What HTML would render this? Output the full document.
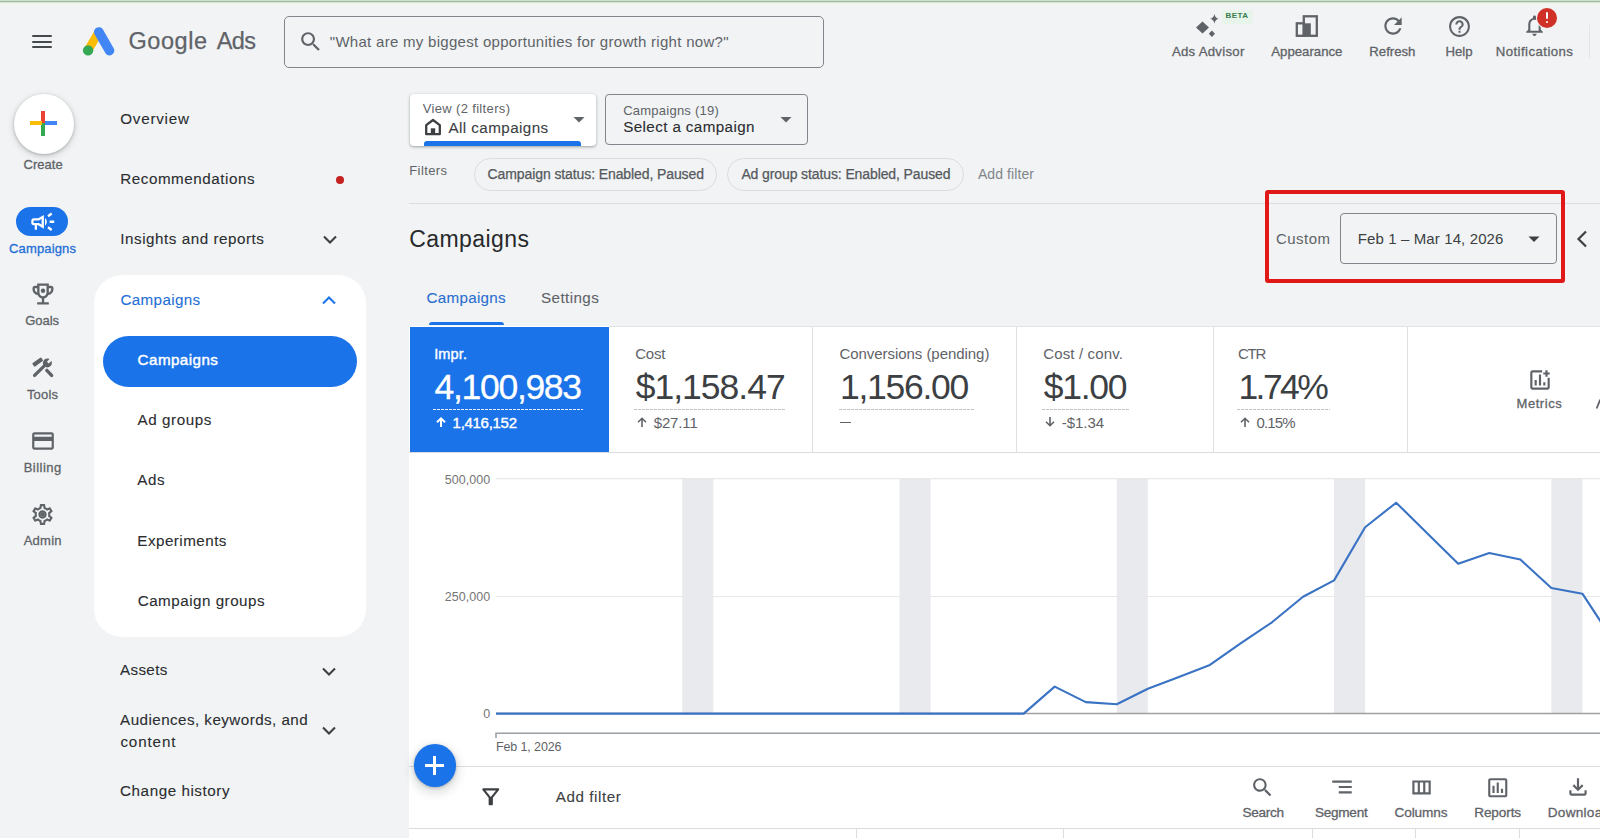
<!DOCTYPE html>
<html><head><meta charset="utf-8"><style>
html,body{margin:0;padding:0}
body{width:1600px;height:838px;overflow:hidden;background:#f1f3f4;font-family:"Liberation Sans", sans-serif;position:relative}
.t{position:absolute;white-space:nowrap}
</style></head><body>
<div style="position:absolute;left:0px;top:0px;width:1600px;height:1px;background:#cde1cc"></div>
<div style="position:absolute;left:0px;top:1px;width:1600px;height:1px;background:#a4b9a4"></div>
<div style="position:absolute;left:0px;top:2px;width:1600px;height:1px;background:#d6e8d4"></div>
<div style="position:absolute;left:0px;top:3px;width:1600px;height:1px;background:#ebf5eb"></div>
<div style="position:absolute;left:32px;top:35.2px;width:20px;height:2px;background:#45484c;border-radius:1px"></div>
<div style="position:absolute;left:32px;top:40.5px;width:20px;height:2px;background:#45484c;border-radius:1px"></div>
<div style="position:absolute;left:32px;top:45.8px;width:20px;height:2px;background:#45484c;border-radius:1px"></div>
<svg style="position:absolute;left:82px;top:26px;" width="34" height="31" viewBox="0 0 34 31">
<line x1="6" y1="24.4" x2="16.8" y2="6" stroke="#fbbc04" stroke-width="8.6" stroke-linecap="butt"/>
<line x1="16.8" y1="6" x2="27.5" y2="24.6" stroke="#4285f4" stroke-width="9.6" stroke-linecap="round"/>
<circle cx="6.1" cy="24.4" r="5.2" fill="#34a853"/>
</svg>
<div class="t" style="left:128.40px;top:30.00px;font-size:23.5px;line-height:23.5px;color:#5f6368;letter-spacing:0.603px;-webkit-text-stroke:0.25px #5f6368;">Google</div>
<div class="t" style="left:216.70px;top:30.00px;font-size:23.5px;line-height:23.5px;color:#5f6368;letter-spacing:-0.539px;-webkit-text-stroke:0.25px #5f6368;">Ads</div>
<div style="position:absolute;left:284px;top:16px;width:539.5px;height:51.5px;border:1.5px solid #80868b;border-radius:5px;box-sizing:border-box"></div>
<svg style="position:absolute;left:297.80px;top:28.75px" width="25.5" height="25.5" viewBox="0 0 24 24"><path d="M15.5 14h-.79l-.28-.27C15.41 12.59 16 11.11 16 9.5 16 5.91 13.09 3 9.5 3S3 5.91 3 9.5 5.91 16 9.5 16c1.61 0 3.09-.59 4.23-1.57l.27.28v.79l5 4.99L20.49 19l-4.99-5zm-6 0C7.01 14 5 11.99 5 9.5S7.01 5 9.5 5 14 7.01 14 9.5 11.99 14 9.5 14z" fill="#5f6368"/></svg>
<div class="t" style="left:329.80px;top:34.00px;font-size:15px;line-height:15px;color:#5f6368;letter-spacing:0.289px;">"What are my biggest opportunities for growth right now?"</div>
<svg style="position:absolute;left:1190px;top:10px;" width="34" height="30" viewBox="0 0 34 30">
<path d="M12.5 11.5 L19 17.5 L12.5 23.5 L6 17.5 Z" fill="#5f6368"/>
<path d="M24.4 4.2 Q25 8 28.5 8.8 Q25 9.6 24.4 13.4 Q23.8 9.6 20.3 8.8 Q23.8 8 24.4 4.2 Z" fill="#5f6368" transform="translate(24.4 8.8) scale(1.05) translate(-24.4 -8.8)"/>
<path d="M21.9 20.5 L25 23.7 L21.9 26.9 L18.8 23.7 Z" fill="#5f6368"/>
</svg>
<div style="position:absolute;left:1222px;top:9.5px;width:31px;height:14px;background:#e6f4ea;border-radius:3px"></div>
<div class="t" style="left:1225.60px;top:12.00px;font-size:8px;line-height:8px;color:#3a7a50;font-weight:700;letter-spacing:0.407px;">BETA</div>
<div class="t" style="left:1171.90px;top:45.00px;font-size:13.2px;line-height:13.2px;color:#5f6368;letter-spacing:0.280px;-webkit-text-stroke:0.3px #5f6368;">Ads Advisor</div>
<svg style="position:absolute;left:1294px;top:14px;" width="26" height="24" viewBox="0 0 26 24">
<rect x="2.8" y="9.3" width="7" height="12.5" fill="none" stroke="#5f6368" stroke-width="2.3"/>
<rect x="9.8" y="2.3" width="13" height="19.5" fill="none" stroke="#5f6368" stroke-width="2.3"/>
<rect x="9.8" y="9.3" width="7" height="12.5" fill="#5f6368"/>
</svg>
<div class="t" style="left:1271.25px;top:45.00px;font-size:13.2px;line-height:13.2px;color:#5f6368;letter-spacing:0.008px;-webkit-text-stroke:0.3px #5f6368;">Appearance</div>
<svg style="position:absolute;left:1379.85px;top:13.00px" width="26" height="26" viewBox="0 0 24 24"><path d="M17.65 6.35C16.2 4.9 14.21 4 12 4c-4.42 0-7.99 3.58-7.99 8s3.57 8 7.99 8c3.73 0 6.84-2.55 7.73-6h-2.08c-.82 2.33-3.04 4-5.65 4-3.31 0-6-2.69-6-6s2.69-6 6-6c1.66 0 3.14.69 4.220 1.78L13 11h7V4l-2.35 2.35z" fill="#5f6368"/></svg>
<div class="t" style="left:1369.30px;top:45.00px;font-size:13.2px;line-height:13.2px;color:#5f6368;letter-spacing:-0.006px;-webkit-text-stroke:0.3px #5f6368;">Refresh</div>
<svg style="position:absolute;left:1446.90px;top:13.65px" width="25" height="25" viewBox="0 0 24 24"><path d="M11 18h2v-2h-2v2zm1-16C6.48 2 2 6.48 2 12s4.48 10 10 10 10-4.48 10-10S17.52 2 12 2zm0 18c-4.41 0-8-3.59-8-8s3.59-8 8-8 8 3.59 8 8-3.59 8-8 8zm0-14c-2.21 0-4 1.79-4 4h2c0-1.1.9-2 2-2s2 .9 2 2c0 2-3 1.75-3 5h2c0-2.25 3-2.5 3-5 0-2.21-1.79-4-4-4z" fill="#5f6368"/></svg>
<div class="t" style="left:1445.50px;top:45.00px;font-size:13.2px;line-height:13.2px;color:#5f6368;letter-spacing:-0.053px;-webkit-text-stroke:0.3px #5f6368;">Help</div>
<svg style="position:absolute;left:1522.00px;top:12.90px" width="25" height="25" viewBox="0 0 24 24"><path d="M12 22c1.1 0 2-.9 2-2h-4c0 1.1.9 2 2 2zm6-6v-5c0-3.07-1.64-5.64-4.5-6.32V4c0-.83-.67-1.5-1.5-1.5s-1.5.67-1.5 1.5v.68C7.63 5.36 6 7.92 6 11v5l-2 2v1h16v-1l-2-2zm-2 1H8v-6c0-2.48 1.51-4.5 4-4.5s4 2.020 4 4.5v6z" fill="#5f6368"/></svg>
<div style="position:absolute;left:1536.5px;top:7.5px;width:20.5px;height:20.5px;background:#d03127;border-radius:50%;box-shadow:0 0 0 1px #f1f3f4"></div>
<div style="position:absolute;left:1545.6px;top:11.5px;width:2.3px;height:7.5px;background:#fff;border-radius:1px"></div>
<div style="position:absolute;left:1545.6px;top:21px;width:2.3px;height:2.3px;background:#fff;border-radius:1px"></div>
<div class="t" style="left:1495.75px;top:45.00px;font-size:13.2px;line-height:13.2px;color:#5f6368;letter-spacing:0.445px;-webkit-text-stroke:0.3px #5f6368;">Notifications</div>
<div style="position:absolute;left:1588.5px;top:25px;width:1px;height:33px;background:#e3e5e8"></div>
<div style="position:absolute;left:13.5px;top:93.5px;width:60px;height:60px;background:#fff;border-radius:50%;box-shadow:0 1px 3px rgba(60,64,67,.3),0 2px 6px 1px rgba(60,64,67,.15)"></div>
<div style="position:absolute;left:41.3px;top:110.5px;width:3.8px;height:12.5px;background:#ea4335"></div>
<div style="position:absolute;left:44.5px;top:120.8px;width:12px;height:3.8px;background:#4285f4"></div>
<div style="position:absolute;left:41.3px;top:122.8px;width:3.8px;height:13.2px;background:#34a853"></div>
<div style="position:absolute;left:30px;top:120.8px;width:11.5px;height:3.8px;background:#fbbc04"></div>
<div class="t" style="left:23.60px;top:158.00px;font-size:13px;line-height:13px;color:#5f6368;letter-spacing:0.014px;-webkit-text-stroke:0.3px #5f6368;">Create</div>
<div style="position:absolute;left:16px;top:207px;width:52px;height:29px;background:#1a73e8;border-radius:14.5px"></div>
<svg style="position:absolute;left:28.65px;top:208.15px" width="27.5" height="27.5" viewBox="0 0 24 24"><path d="M18 13v-2h4v2h-4Zm1.2 7L16 17.6l1.2-1.6 3.2 2.4-1.2 1.6Zm-2-12L16 6.4 19.2 4l1.2 1.6L17.2 8ZM5 19v-4H4q-.825 0-1.412-.587T2 13v-2q0-.825.588-1.413T4 9h4l5-3v12l-5-3H7v4H5Zm6-4.550v-4.9L8.55 11H4v2h4.55L11 14.45ZM14 15.35v-6.7q.675.6 1.088 1.463T15.5 12q0 1.025-.413 1.888T14 15.35Z" fill="#fff"/></svg>
<div class="t" style="left:9.00px;top:242.00px;font-size:13px;line-height:13px;color:#1f6fd6;letter-spacing:0.157px;-webkit-text-stroke:0.3px #1f6fd6;">Campaigns</div>
<svg style="position:absolute;left:28.55px;top:280.20px" width="28" height="28" viewBox="0 0 24 24"><path d="M19 5h-2V3H7v2H5c-1.1 0-2 .9-2 2v1c0 2.55 1.92 4.63 4.39 4.94.63 1.5 1.98 2.63 3.61 2.96V19H7v2h10v-2h-4v-3.1c1.63-.33 2.98-1.46 3.61-2.96C19.08 12.63 21 10.55 21 8V7c0-1.1-.9-2-2-2zM5 8V7h2v3.82C5.84 10.4 5 9.3 5 8zm7 6c-1.65 0-3-1.35-3-3V5h6v6c0 1.65-1.35 3-3 3zm7-6c0 1.3-.84 2.4-2 2.82V7h2v1z" fill="#5f6368"/><circle cx="12" cy="9.2" r="1.9" fill="#5f6368"/></svg>
<div class="t" style="left:25.30px;top:314.00px;font-size:13px;line-height:13px;color:#5f6368;letter-spacing:-0.066px;-webkit-text-stroke:0.3px #5f6368;">Goals</div>
<svg style="position:absolute;left:30.6px;top:356.2px;" width="24" height="24" viewBox="0 0 24 24">
<line x1="15.8" y1="14.4" x2="20.6" y2="19.4" stroke="#5f6368" stroke-width="3.4" stroke-linecap="round"/>
<rect x="-5.4" y="-2.1" width="10.8" height="4.2" rx="0.8" transform="translate(6.7 6.1) rotate(-36)" fill="#5f6368"/>
<line x1="3.6" y1="19.4" x2="13.8" y2="9.4" stroke="#5f6368" stroke-width="3.3" stroke-linecap="round"/>
<circle cx="16.4" cy="6.9" r="4.5" fill="#5f6368"/>
<rect x="-1.3" y="-3.2" width="2.6" height="6.4" transform="translate(19.1 4.3) rotate(45)" fill="#f1f3f4"/>
</svg>
<div class="t" style="left:26.90px;top:388.00px;font-size:13px;line-height:13px;color:#5f6368;letter-spacing:0.186px;-webkit-text-stroke:0.3px #5f6368;">Tools</div>
<svg style="position:absolute;left:29.75px;top:427.90px" width="26" height="26" viewBox="0 0 24 24"><path d="M20 4H4c-1.11 0-1.99.89-1.99 2L2 18c0 1.11.89 2 2 2h16c1.11 0 2-.89 2-2V6c0-1.11-.89-2-2-2zm0 14H4v-6h16v6zm0-10H4V6h16v2z" fill="#5f6368"/></svg>
<div class="t" style="left:23.70px;top:461.00px;font-size:13px;line-height:13px;color:#5f6368;letter-spacing:0.470px;-webkit-text-stroke:0.3px #5f6368;">Billing</div>
<svg style="position:absolute;left:30.25px;top:502.05px" width="25" height="25" viewBox="0 0 24 24"><path d="M19.43 12.98c.04-.32.07-.64.07-.98 0-.34-.03-.66-.07-.98l2.11-1.65c.19-.15.24-.42.12-.64l-2-3.46c-.09-.16-.26-.25-.44-.25-.06 0-.12.01-.17.03l-2.49 1c-.52-.4-1.08-.73-1.69-.98l-.38-2.65C14.46 2.18 14.25 2 14 2h-4c-.25 0-.46.18-.49.42l-.38 2.65c-.61.25-1.170.59-1.69.98l-2.49-1c-.06-.02-.12-.03-.18-.03-.17 0-.34.09-.43.25l-2 3.46c-.13.22-.07.49.12.64l2.11 1.650c-.04.32-.07.65-.07.98 0 .33.03.66.07.98l-2.11 1.65c-.19.15-.24.42-.12.64l2 3.46c.09.16.26.25.44.25.06 0 .12-.01.17-.03l2.49-1c.52.4 1.08.73 1.69.98l.38 2.65c.03.24.24.42.49.42h4c.25 0 .46-.18.49-.42l.38-2.65c.61-.25 1.17-.59 1.69-.98l2.49 1c.06.02.12.03.18.03.17 0 .34-.09.43-.25l2-3.46c.12-.22.07-.49-.12-.64l-2.11-1.65zm-1.98-1.71c.04.31.05.52.05.73 0 .21-.02.43-.05.73l-.14 1.13.89.7 1.08.84-.7 1.21-1.27-.51-1.04-.42-.9.68c-.43.32-.84.56-1.25.73l-1.06.43-.16 1.13-.2 1.35h-1.4l-.19-1.35-.16-1.13-1.06-.43c-.43-.18-.83-.41-1.23-.71l-.91-.7-1.06.43-1.27.51-.7-1.21 1.08-.84.89-.7-.14-1.130c-.03-.31-.05-.54-.05-.74s.02-.43.05-.73l.14-1.13-.89-.7-1.08-.84.7-1.21 1.27.51 1.04.42.9-.68c.43-.32.84-.56 1.25-.73l1.06-.43.16-1.13.2-1.35h1.39l.19 1.35.16 1.13 1.06.43c.43.18.83.41 1.23.71l.91.7 1.06-.43 1.27-.51.7 1.21-1.07.85-.89.7.14 1.13zM12 8c-2.21 0-4 1.79-4 4s1.79 4 4 4 4-1.79 4-4-1.79-4-4-4zm0 6c-1.1 0-2-.9-2-2s.9-2 2-2 2 .9 2 2-.9 2-2 2z" fill="#5f6368"/><circle cx="12" cy="12" r="2.2" fill="#5f6368"/></svg>
<div class="t" style="left:23.70px;top:534.00px;font-size:13px;line-height:13px;color:#5f6368;letter-spacing:0.236px;-webkit-text-stroke:0.3px #5f6368;">Admin</div>
<div class="t" style="left:120.30px;top:111.00px;font-size:15.2px;line-height:15.2px;color:#2b2d30;letter-spacing:0.759px;-webkit-text-stroke:0.1px #2b2d30;">Overview</div>
<div class="t" style="left:120.30px;top:171.00px;font-size:15.2px;line-height:15.2px;color:#2b2d30;letter-spacing:0.541px;-webkit-text-stroke:0.1px #2b2d30;">Recommendations</div>
<div style="position:absolute;left:335.7px;top:175.7px;width:8px;height:8px;background:#c5221f;border-radius:50%"></div>
<div class="t" style="left:120.30px;top:231.00px;font-size:15.2px;line-height:15.2px;color:#2b2d30;letter-spacing:0.537px;-webkit-text-stroke:0.1px #2b2d30;">Insights and reports</div>
<svg style="position:absolute;left:321.5px;top:234.5px;" width="16" height="9" viewBox="0 0 16 9"><path d="M2 1.5 L8 7.5 L14 1.5" fill="none" stroke="#3c4043" stroke-width="2.1"/></svg>
<div style="position:absolute;left:94.4px;top:274.5px;width:271.5px;height:362.5px;background:#fff;border-radius:28px"></div>
<div class="t" style="left:120.50px;top:292.00px;font-size:15.2px;line-height:15.2px;color:#1f6fd6;letter-spacing:0.353px;-webkit-text-stroke:0.1px #1f6fd6;">Campaigns</div>
<svg style="position:absolute;left:321.3px;top:296.0px;" width="16" height="9" viewBox="0 0 16 9"><path d="M2 7.5 L8 1.5 L14 7.5" fill="none" stroke="#1a73e8" stroke-width="2.1"/></svg>
<div style="position:absolute;left:102.7px;top:335.5px;width:254.7px;height:51px;background:#1a73e8;border-radius:25.5px"></div>
<div class="t" style="left:137.60px;top:352.00px;font-size:15.2px;line-height:15.2px;color:#fff;letter-spacing:0.441px;-webkit-text-stroke:0.45px #fff;">Campaigns</div>
<div class="t" style="left:137.60px;top:412.00px;font-size:15.2px;line-height:15.2px;color:#2b2d30;letter-spacing:0.553px;-webkit-text-stroke:0.1px #2b2d30;">Ad groups</div>
<div class="t" style="left:137.30px;top:472.00px;font-size:15.2px;line-height:15.2px;color:#2b2d30;letter-spacing:0.609px;-webkit-text-stroke:0.1px #2b2d30;">Ads</div>
<div class="t" style="left:137.30px;top:533.00px;font-size:15.2px;line-height:15.2px;color:#2b2d30;letter-spacing:0.473px;-webkit-text-stroke:0.1px #2b2d30;">Experiments</div>
<div class="t" style="left:137.70px;top:593.00px;font-size:15.2px;line-height:15.2px;color:#2b2d30;letter-spacing:0.500px;-webkit-text-stroke:0.1px #2b2d30;">Campaign groups</div>
<div class="t" style="left:120.10px;top:662.00px;font-size:15.2px;line-height:15.2px;color:#2b2d30;letter-spacing:0.320px;-webkit-text-stroke:0.1px #2b2d30;">Assets</div>
<svg style="position:absolute;left:321.2px;top:666.5px;" width="16" height="9" viewBox="0 0 16 9"><path d="M2 1.5 L8 7.5 L14 1.5" fill="none" stroke="#3c4043" stroke-width="2.1"/></svg>
<div class="t" style="left:120.10px;top:712.00px;font-size:15.2px;line-height:15.2px;color:#2b2d30;letter-spacing:0.447px;-webkit-text-stroke:0.1px #2b2d30;">Audiences, keywords, and</div>
<div class="t" style="left:120.40px;top:734.00px;font-size:15.2px;line-height:15.2px;color:#2b2d30;letter-spacing:0.874px;-webkit-text-stroke:0.1px #2b2d30;">content</div>
<svg style="position:absolute;left:321.2px;top:725.5px;" width="16" height="9" viewBox="0 0 16 9"><path d="M2 1.5 L8 7.5 L14 1.5" fill="none" stroke="#3c4043" stroke-width="2.1"/></svg>
<div class="t" style="left:120.10px;top:783.00px;font-size:15.2px;line-height:15.2px;color:#2b2d30;letter-spacing:0.557px;-webkit-text-stroke:0.1px #2b2d30;">Change history</div>
<div style="position:absolute;left:409.5px;top:94px;width:186.5px;height:51.5px;background:#fff;border-radius:4px;box-shadow:0 1px 2px rgba(60,64,67,.3),0 1px 3px 1px rgba(60,64,67,.12);overflow:hidden"></div>
<div class="t" style="left:422.70px;top:102.00px;font-size:13px;line-height:13px;color:#5f6368;letter-spacing:0.345px;">View (2 filters)</div>
<svg style="position:absolute;left:423px;top:117px;" width="20" height="19" viewBox="0 0 20 19"><path d="M3.2 17.2 L3.2 8.2 L10 3 L16.8 8.2 L16.8 17.2 Z" fill="none" stroke="#3c4043" stroke-width="2.3" stroke-linejoin="round"/><rect x="7.8" y="11.3" width="4.4" height="5.9" fill="#3c4043"/></svg>
<div class="t" style="left:448.40px;top:120.00px;font-size:15.2px;line-height:15.2px;color:#3c4043;letter-spacing:0.440px;-webkit-text-stroke:0.1px #3c4043;">All campaigns</div>
<svg style="position:absolute;left:572px;top:115px;" width="14" height="9" viewBox="0 0 14 9"><path d="M1.5 2 L12.5 2 L7 7.5 Z" fill="#5f6368"/></svg>
<div style="position:absolute;left:424px;top:140.7px;width:157px;height:5px;background:#1a73e8;border-radius:3px 3px 0 0"></div>
<div style="position:absolute;left:605.3px;top:94.4px;width:202.7px;height:50.8px;border:1px solid #80868b;border-radius:4px;box-sizing:border-box"></div>
<div class="t" style="left:623.20px;top:104.00px;font-size:13px;line-height:13px;color:#5f6368;letter-spacing:0.239px;">Campaigns (19)</div>
<div class="t" style="left:623.20px;top:119.00px;font-size:15.2px;line-height:15.2px;color:#2b2d30;letter-spacing:0.396px;-webkit-text-stroke:0.1px #2b2d30;">Select a campaign</div>
<svg style="position:absolute;left:779px;top:115px;" width="14" height="9" viewBox="0 0 14 9"><path d="M1.5 2 L12.5 2 L7 7.5 Z" fill="#5f6368"/></svg>
<div class="t" style="left:409.30px;top:164.00px;font-size:13px;line-height:13px;color:#5f6368;letter-spacing:0.385px;">Filters</div>
<div style="position:absolute;left:473.8px;top:157.8px;width:243.7px;height:33.4px;border:1px solid #dadce0;border-radius:17px;box-sizing:border-box"></div>
<div class="t" style="left:487.60px;top:167.00px;font-size:14px;line-height:14px;color:#55595d;letter-spacing:-0.100px;-webkit-text-stroke:0.25px #55595d;">Campaign status: Enabled, Paused</div>
<div style="position:absolute;left:727.4px;top:157.8px;width:237.1px;height:33.4px;border:1px solid #dadce0;border-radius:17px;box-sizing:border-box"></div>
<div class="t" style="left:741.40px;top:167.00px;font-size:14px;line-height:14px;color:#55595d;letter-spacing:-0.109px;-webkit-text-stroke:0.25px #55595d;">Ad group status: Enabled, Paused</div>
<div class="t" style="left:977.90px;top:167.00px;font-size:14px;line-height:14px;color:#80868b;letter-spacing:0.093px;">Add filter</div>
<div style="position:absolute;left:409px;top:203px;width:1191px;height:1px;background:#dadce0"></div>
<div class="t" style="left:409.30px;top:228.00px;font-size:23px;line-height:23px;color:#28292c;letter-spacing:0.422px;">Campaigns</div>
<div class="t" style="left:1276.00px;top:231.00px;font-size:15px;line-height:15px;color:#5f6368;letter-spacing:0.465px;">Custom</div>
<div style="position:absolute;left:1339.5px;top:212.8px;width:217px;height:51px;border:1px solid #80868b;border-radius:4px;box-sizing:border-box"></div>
<div class="t" style="left:1357.80px;top:231.00px;font-size:15px;line-height:15px;color:#3c4043;letter-spacing:0.114px;">Feb 1 – Mar 14, 2026</div>
<svg style="position:absolute;left:1527px;top:234px;" width="14" height="9" viewBox="0 0 14 9"><path d="M1.5 2.5 L12.5 2.5 L7 8 Z" fill="#3c4043"/></svg>
<svg style="position:absolute;left:1574px;top:229px;" width="16" height="20" viewBox="0 0 16 20"><path d="M12 2.5 L4.5 10 L12 17.5" fill="none" stroke="#3c4043" stroke-width="2.2"/></svg>
<div style="position:absolute;left:1264.7px;top:189.7px;width:300.8px;height:93.3px;border:4px solid #e01818;border-radius:3px;box-sizing:border-box"></div>
<div class="t" style="left:426.50px;top:290.00px;font-size:15.2px;line-height:15.2px;color:#2a6fd0;letter-spacing:0.291px;-webkit-text-stroke:0.1px #2a6fd0;">Campaigns</div>
<div class="t" style="left:541.00px;top:290.00px;font-size:15.2px;line-height:15.2px;color:#5f6368;letter-spacing:0.413px;-webkit-text-stroke:0.1px #5f6368;">Settings</div>
<div style="position:absolute;left:428.6px;top:321.5px;width:75px;height:3.5px;background:#1a73e8;border-radius:3px 3px 0 0"></div>
<div style="position:absolute;left:409px;top:326px;width:1191px;height:512px;background:#fff"></div>
<div style="position:absolute;left:609px;top:326px;width:991px;height:1px;background:#e3e3e3"></div>
<div style="position:absolute;left:409px;top:452px;width:1191px;height:1px;background:#dadce0"></div>
<div style="position:absolute;left:409.5px;top:326.5px;width:199.5px;height:125.5px;background:#1a73e8"></div>
<div style="position:absolute;left:812px;top:327px;width:1px;height:125px;background:#e0e0e0"></div>
<div style="position:absolute;left:1016.4px;top:327px;width:1px;height:125px;background:#e0e0e0"></div>
<div style="position:absolute;left:1212.5px;top:327px;width:1px;height:125px;background:#e0e0e0"></div>
<div style="position:absolute;left:1406.7px;top:327px;width:1px;height:125px;background:#e0e0e0"></div>
<div class="t" style="left:434.20px;top:347.00px;font-size:14.5px;line-height:14.5px;color:#fff;letter-spacing:0.143px;-webkit-text-stroke:0.4px #fff;">Impr.</div>
<div class="t" style="left:434.60px;top:370.00px;font-size:35.5px;line-height:35.5px;color:#fff;letter-spacing:-1.309px;-webkit-text-stroke:0.3px #fff;">4,100,983</div>
<div style="position:absolute;left:433.2px;top:408.8px;width:150px;height:1px;background-image:linear-gradient(90deg,rgba(255,255,255,.9) 65%,transparent 65%);background-size:4px 1px"></div>
<svg style="position:absolute;left:435.2px;top:416px;" width="12" height="12" viewBox="0 0 12 12"><path d="M6 11 L6 2.5 M2 6.3 L6 2.3 L10 6.3" fill="none" stroke="#fff" stroke-width="2"/></svg>
<div class="t" style="left:452.60px;top:415.00px;font-size:15px;line-height:15px;color:#fff;letter-spacing:-0.294px;-webkit-text-stroke:0.4px #fff;">1,416,152</div>
<div class="t" style="left:635.30px;top:346.00px;font-size:15px;line-height:15px;color:#5f6368;letter-spacing:-0.275px;">Cost</div>
<div class="t" style="left:635.70px;top:370.00px;font-size:35.5px;line-height:35.5px;color:#3c4043;letter-spacing:-0.997px;">$1,158.47</div>
<div style="position:absolute;left:634.3px;top:408.8px;width:152px;height:1px;background-image:linear-gradient(90deg,#c4c4c4 65%,transparent 65%);background-size:4px 1px"></div>
<svg style="position:absolute;left:636.3px;top:416px;" width="12" height="12" viewBox="0 0 12 12"><path d="M6 11 L6 2.5 M2 6.3 L6 2.3 L10 6.3" fill="none" stroke="#5f6368" stroke-width="1.6"/></svg>
<div class="t" style="left:653.70px;top:415.00px;font-size:15px;line-height:15px;color:#5f6368;letter-spacing:-0.135px;">$27.11</div>
<div class="t" style="left:839.50px;top:346.00px;font-size:15px;line-height:15px;color:#5f6368;letter-spacing:-0.052px;">Conversions (pending)</div>
<div class="t" style="left:839.90px;top:370.00px;font-size:35.5px;line-height:35.5px;color:#3c4043;letter-spacing:-1.255px;">1,156.00</div>
<div style="position:absolute;left:838.5px;top:408.8px;width:135px;height:1px;background-image:linear-gradient(90deg,#c4c4c4 65%,transparent 65%);background-size:4px 1px"></div>
<div style="position:absolute;left:840px;top:421.5px;width:11px;height:1.3px;background:#5f6368"></div>
<div class="t" style="left:1043.30px;top:346.00px;font-size:15px;line-height:15px;color:#5f6368;letter-spacing:0.130px;">Cost / conv.</div>
<div class="t" style="left:1043.70px;top:370.00px;font-size:35.5px;line-height:35.5px;color:#3c4043;letter-spacing:-1.260px;">$1.00</div>
<div style="position:absolute;left:1042.3px;top:408.8px;width:88px;height:1px;background-image:linear-gradient(90deg,#c4c4c4 65%,transparent 65%);background-size:4px 1px"></div>
<svg style="position:absolute;left:1044.3px;top:416px;" width="12" height="12" viewBox="0 0 12 12"><path d="M6 1 L6 9.5 M2 5.7 L6 9.7 L10 5.7" fill="none" stroke="#5f6368" stroke-width="1.6"/></svg>
<div class="t" style="left:1061.70px;top:415.00px;font-size:15px;line-height:15px;color:#5f6368;letter-spacing:-0.005px;">-$1.34</div>
<div class="t" style="left:1238.00px;top:346.00px;font-size:15px;line-height:15px;color:#5f6368;letter-spacing:-1.262px;">CTR</div>
<div class="t" style="left:1238.40px;top:370.00px;font-size:35.5px;line-height:35.5px;color:#3c4043;letter-spacing:-2.561px;">1.74%</div>
<div style="position:absolute;left:1237px;top:408.8px;width:93px;height:1px;background-image:linear-gradient(90deg,#c4c4c4 65%,transparent 65%);background-size:4px 1px"></div>
<svg style="position:absolute;left:1239px;top:416px;" width="12" height="12" viewBox="0 0 12 12"><path d="M6 11 L6 2.5 M2 6.3 L6 2.3 L10 6.3" fill="none" stroke="#5f6368" stroke-width="1.6"/></svg>
<div class="t" style="left:1256.40px;top:415.00px;font-size:15px;line-height:15px;color:#5f6368;letter-spacing:-0.831px;">0.15%</div>
<svg style="position:absolute;left:1526.95px;top:366.55px" width="26" height="26" viewBox="0 0 24 24"><path d="M7 17h2v-5H7v5Zm4 0h2V7h-2v10Zm4 0h2v-3h-2v3ZM5 21q-.825 0-1.412-.587T3 19V5q0-.825.588-1.413T5 3h9v2H5v14h14v-9h2v9q0 .825-.587 1.413T19 21H5Zm12-12V7h-2V5h2V3h2v2h2v2h-2v2h-2Z" fill="#5f6368"/></svg>
<div class="t" style="left:1516.60px;top:397.00px;font-size:13px;line-height:13px;color:#5f6368;letter-spacing:0.535px;-webkit-text-stroke:0.3px #5f6368;">Metrics</div>
<svg style="position:absolute;left:1594px;top:398px;" width="8" height="12" viewBox="0 0 8 12"><path d="M2.6 10.5 L6.2 1.5" stroke="#5f6368" stroke-width="1.8"/></svg>
<div class="t" style="left:444.80px;top:474.00px;font-size:12.5px;line-height:12.5px;color:#757575;letter-spacing:0.019px;">500,000</div>
<div class="t" style="left:444.80px;top:591.00px;font-size:12.5px;line-height:12.5px;color:#757575;letter-spacing:0.019px;">250,000</div>
<div class="t" style="left:483.20px;top:708.00px;font-size:12.5px;line-height:12.5px;color:#757575;">0</div>
<svg style="position:absolute;left:409px;top:452px;" width="1191" height="314" viewBox="0 0 1191 314"><rect x="273.24" y="27" width="31.04" height="235" fill="#e8eaed"/><rect x="490.52" y="27" width="31.04" height="235" fill="#e8eaed"/><rect x="707.80" y="27" width="31.04" height="235" fill="#e8eaed"/><rect x="925.08" y="27" width="31.04" height="235" fill="#e8eaed"/><rect x="1142.36" y="27" width="31.04" height="235" fill="#e8eaed"/><line x1="87" y1="26.69999999999999" x2="1191" y2="26.69999999999999" stroke="#e8e8e8" stroke-width="1.2"/><line x1="87" y1="144.5" x2="1191" y2="144.5" stroke="#e8e8e8" stroke-width="1.2"/><line x1="87" y1="261.6" x2="1191" y2="261.6" stroke="#a0a0a0" stroke-width="1.5"/><path d="M87 286 L87 281.20000000000005 L1191 281.20000000000005" fill="none" stroke="#9aa0a6" stroke-width="1.6"/><polyline points="87.00,261.60 118.04,261.60 149.08,261.60 180.12,261.60 211.16,261.60 242.20,261.60 273.24,261.60 304.28,261.60 335.32,261.60 366.36,261.60 397.40,261.60 428.44,261.60 459.48,261.60 490.52,261.60 521.56,261.60 552.60,261.60 583.64,261.60 614.68,261.60 645.72,234.60 676.76,250.10 707.80,252.30 738.84,236.80 769.88,224.90 800.92,212.90 831.96,191.20 863.00,170.30 894.04,144.80 925.08,128.40 956.12,75.20 987.16,50.70 1018.20,81.20 1049.24,111.80 1080.28,101.00 1111.32,107.50 1142.36,136.00 1173.40,141.70 1204.44,189.00 1235.48,208.00" fill="none" stroke="#3a72c4" stroke-width="2.1" stroke-linejoin="round"/></svg>
<div class="t" style="left:496.00px;top:741.00px;font-size:12.5px;line-height:12.5px;color:#5f6368;letter-spacing:-0.122px;">Feb 1, 2026</div>
<div style="position:absolute;left:409px;top:766px;width:1191px;height:1px;background:#dadce0"></div>
<div style="position:absolute;left:409px;top:827.5px;width:1191px;height:1px;background:#dadce0"></div>
<div style="position:absolute;left:855.7px;top:828px;width:1px;height:10px;background:#dadce0"></div>
<div style="position:absolute;left:1062.6px;top:828px;width:1px;height:10px;background:#dadce0"></div>
<div style="position:absolute;left:1312px;top:828px;width:1px;height:10px;background:#dadce0"></div>
<div style="position:absolute;left:1415.2px;top:828px;width:1px;height:10px;background:#dadce0"></div>
<div style="position:absolute;left:1518.8px;top:828px;width:1px;height:10px;background:#dadce0"></div>
<div style="position:absolute;left:413.5px;top:744px;width:42.5px;height:42.5px;background:#1a73e8;border-radius:50%;box-shadow:0 1px 3px rgba(60,64,67,.3),0 4px 8px 3px rgba(60,64,67,.15)"></div>
<div style="position:absolute;left:433.3px;top:755.7px;width:3px;height:19px;background:#fff"></div>
<div style="position:absolute;left:425.3px;top:763.7px;width:19px;height:3px;background:#fff"></div>
<svg style="position:absolute;left:478.05px;top:784.15px" width="25.5" height="25.5" viewBox="0 0 24 24"><path d="M11 20q-.425 0-.712-.288T10 19v-6L4.2 5.6q-.375-.5-.112-1.05T5 4h14q.65 0 .913.55T19.8 5.6L14 13v6q0 .425-.288.713T13 20h-2Zm1-7.7L16.95 6h-9.9L12 12.3Z" fill="#3c4043"/></svg>
<div class="t" style="left:555.80px;top:789.00px;font-size:15.2px;line-height:15.2px;color:#3c4043;letter-spacing:0.555px;-webkit-text-stroke:0.1px #3c4043;">Add filter</div>
<svg style="position:absolute;left:1250.25px;top:774.80px" width="25" height="25" viewBox="0 0 24 24"><path d="M15.5 14h-.79l-.28-.27C15.41 12.59 16 11.11 16 9.5 16 5.91 13.09 3 9.5 3S3 5.91 3 9.5 5.91 16 9.5 16c1.61 0 3.09-.59 4.23-1.57l.27.28v.79l5 4.99L20.49 19l-4.99-5zm-6 0C7.01 14 5 11.99 5 9.5S7.01 5 9.5 5 14 7.01 14 9.5 11.99 14 9.5 14z" fill="#5f6368"/></svg>
<div class="t" style="left:1242.60px;top:806.00px;font-size:13.6px;line-height:13.6px;color:#5f6368;letter-spacing:-0.316px;-webkit-text-stroke:0.3px #5f6368;">Search</div>
<svg style="position:absolute;left:1328.70px;top:774.30px" width="26" height="26" viewBox="0 0 24 24"><path d="M9 18h12v-2H9v2zM3 6v2h18V6H3zm6 7h12v-2H9v2z" fill="#5f6368"/></svg>
<div class="t" style="left:1315.00px;top:806.00px;font-size:13.6px;line-height:13.6px;color:#5f6368;letter-spacing:-0.289px;-webkit-text-stroke:0.3px #5f6368;">Segment</div>
<svg style="position:absolute;left:1407.50px;top:774.85px" width="26" height="26" viewBox="0 0 24 24"><path d="M4 5v13h17V5H4zm10 2v9h-3V7h3zM6 7h3v9H6V7zm13 9h-3V7h3v9z" fill="#5f6368"/></svg>
<div class="t" style="left:1394.60px;top:806.00px;font-size:13.6px;line-height:13.6px;color:#5f6368;letter-spacing:-0.125px;-webkit-text-stroke:0.3px #5f6368;">Columns</div>
<svg style="position:absolute;left:1485.40px;top:774.55px" width="25.5" height="25.5" viewBox="0 0 24 24"><path d="M9 17H7v-7h2v7zm4 0h-2V7h2v10zm4 0h-2v-4h2v4zm2 2H5V5h14v14zm0-16H5c-1.1 0-2 .9-2 2v14c0 1.1.9 2 2 2h14c1.1 0 2-.9 2-2V5c0-1.1-.9-2-2-2z" fill="#5f6368"/></svg>
<div class="t" style="left:1474.20px;top:806.00px;font-size:13.6px;line-height:13.6px;color:#5f6368;letter-spacing:-0.106px;-webkit-text-stroke:0.3px #5f6368;">Reports</div>
<svg style="position:absolute;left:1565.10px;top:774.05px" width="26" height="26" viewBox="0 0 24 24"><path d="M12 16l-5-5 1.4-1.45 2.6 2.6V4h2v8.15l2.6-2.6L17 11l-5 5Zm-6 4q-.825 0-1.412-.587T4 18v-3h2v3h12v-3h2v3q0 .825-.587 1.413T18 20H6Z" fill="#5f6368"/></svg>
<div class="t" style="left:1547.80px;top:806.00px;font-size:13.6px;line-height:13.6px;color:#5f6368;letter-spacing:0.250px;-webkit-text-stroke:0.3px #5f6368;">Download</div>
</body></html>
